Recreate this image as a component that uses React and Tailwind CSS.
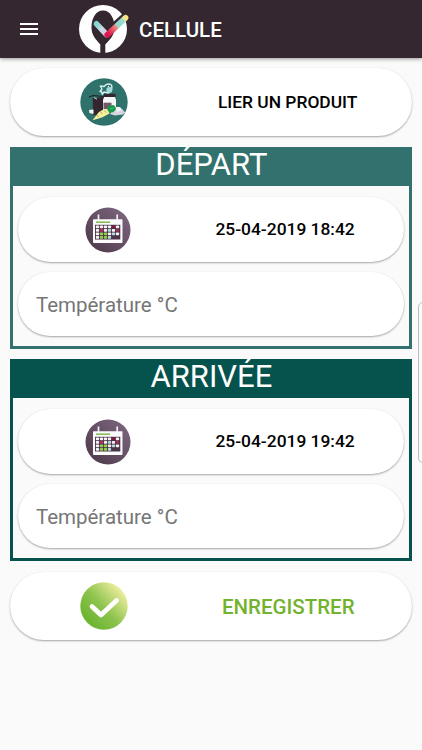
import React from "react";

function Logo() {
  return (
    <svg className="h-[50px] w-[52px] shrink-0" viewBox="0 0 52 50">
      <defs>
        <linearGradient id="tick" gradientUnits="userSpaceOnUse" x1="30" y1="31" x2="50" y2="12.500">
          <stop offset="0" stopColor="#e0124f" />
          <stop offset="0.15" stopColor="#e23558" />
          <stop offset="0.44" stopColor="#ed9187" />
          <stop offset="0.47" stopColor="#8fd8d0" />
          <stop offset="0.78" stopColor="#9ad9d2" />
          <stop offset="0.82" stopColor="#f5e58a" />
          <stop offset="1" stopColor="#f5e58a" />
        </linearGradient>
        <linearGradient id="tickLeft" gradientUnits="userSpaceOnUse" x1="18" y1="18" x2="30" y2="30">
          <stop offset="0" stopColor="#7fd3cd" />
          <stop offset="0.3" stopColor="#9bd8d6" />
          <stop offset="0.5" stopColor="#c9dbe4" />
          <stop offset="1" stopColor="#cfc8dc" />
        </linearGradient>
      </defs>
      <circle cx="25" cy="25" r="24" fill="#fff" />
      <path d="M25 6.500C18 6.500 13.500 14 13.500 23.500C13.500 32 19 36.500 22.300 40.500V50H27.300V40.500C31 36.500 36.500 32 36.500 23.500C36.500 14 32 6.500 25 6.500Z" fill="#34272f" />
      <path d="M33 25L47.500 12" stroke="#34272f" strokeWidth="7.500" strokeLinecap="round" />
      <path d="M18.500 19.800L28.500 30.500" stroke="url(#tickLeft)" strokeWidth="5.600" strokeLinecap="round" />
      <path d="M29.300 30.800L47.500 13.800" stroke="url(#tick)" strokeWidth="5.800" strokeLinecap="round" />
    </svg>
  );
}

function ProductIcon() {
  return (
    <svg className="h-12 w-12 shrink-0" viewBox="0 0 48 48">
      <circle cx="24" cy="24" r="23.700" fill="#2f716b" />
      <path d="M12.700 20L24 19V37H13Z" fill="#34252f" />
      <path d="M9 19L13 17.500L23 18.500L23 21" fill="none" stroke="#241d25" strokeWidth="1.200" />
      <path d="M14 19.500L17 21.200" stroke="#cde4e3" strokeWidth="1" />
      <rect x="23.700" y="15.700" width="12" height="3.500" rx="1" fill="#34252f" />
      <path d="M24 19H35L36 22V34H23V22Z" fill="#f5f4f7" />
      <path d="M23.500 24.700H31.500V31H23.500Z" fill="#715968" />
      <path d="M20 13.500L22 11L20.300 8L24 8.500C26 6 29 5.500 31.500 7C32.500 10 31.500 13 28.500 15L24 14L22.300 16.300L21.500 13.500Z" fill="#2f716b" stroke="#d8f2f1" strokeWidth="1.400" strokeLinejoin="round" />
      <circle cx="29.300" cy="12" r="3" fill="#a2dad9" />
      <circle cx="28.500" cy="8.500" r="0.700" fill="#d8f2f1" />
      <path d="M9 32L13.500 31.500V36L9.500 35Z" fill="#f6f5f7" />
      <path d="M32 33L36 29L40 29L43 32L45 34.500L43 36.500L35 37.500L30 36Z" fill="#d5d6e0" />
      <path d="M35 29.500L39 29L42 32L37 34Z" fill="#f2f2f6" />
      <path d="M12.500 42.300L18.500 34.500Q22 31 28 31L29.500 35.500L22 39.500Z" fill="#f5ee9a" />
      <path d="M20.500 33.500L22 36M24.500 32.500L26 34.500M17 37L18.500 39" stroke="#a59b65" strokeWidth="0.800" />
      <path d="M27.500 30Q27.500 27 31 27.500Q34 26 35 28.500Q37 31 34.500 33Q32 35.500 29.500 34Q27 33 27.500 30Z" fill="#17984c" />
      <path d="M30 31L33.500 30" stroke="#67ca8a" strokeWidth="0.700" />
    </svg>
  );
}

function CalendarIcon({ id }) {
  const colors = [
    ["#f6f2f7", "#f6f2f7", "#f6f2f7", "#f6f2f7", "#85173e", "#f6f2f7"],
    ["#f6f2f7", "#b82b5a", "#f6f2f7", "#b4dbdd", "#f6f2f7", "#a52c53"],
    ["#f6f2f7", "#91ce4d", "#91ce4d", "#f6f2f7", "#b4dbdd", "#f6f2f7"],
    ["#f6f2f7", "#91ce4d", "#91ce4d", "#b4dbdd"],
  ];
  return (
    <svg className="h-[46px] w-[46px] shrink-0" viewBox="0 0 46 46">
      <defs>
        <linearGradient id={id} x1="0" y1="1" x2="1" y2="0">
          <stop offset="0" stopColor="#4b3647" />
          <stop offset="1" stopColor="#806a83" />
        </linearGradient>
      </defs>
      <circle cx="23" cy="23" r="22.500" fill={`url(#${id})`} />
      <path d="M13.500 7.500V13M32.200 7.500V13" stroke="#f4eff5" strokeWidth="1.700" />
      <rect x="8" y="12.300" width="29.500" height="23.700" rx="0.800" fill="#fbfafc" />
      <path d="M11 15.200H25" stroke="#7fba47" strokeWidth="1.500" />
      <path d="M10 17.800H35.300V32.500H10Z" fill="#4b3447" />
      {colors.map((row, y) =>
        row.map((color, x) => (
          <rect key={`${x}-${y}`} x={10.9 + x * 4} y={18.5 + y * 3.5} width="3.200" height="2.800" rx="0.700" fill={color} />
        ))
      )}
    </svg>
  );
}

function SaveIcon() {
  return (
    <svg className="h-12 w-12 shrink-0" viewBox="0 0 48 48">
      <defs>
        <linearGradient id="save" x1="0.150" y1="0.850" x2="0.900" y2="0.150">
          <stop offset="0" stopColor="#6ab42e" />
          <stop offset="0.450" stopColor="#8dc34d" />
          <stop offset="1" stopColor="#f1f0a2" />
        </linearGradient>
      </defs>
      <circle cx="24" cy="24" r="23.700" fill="url(#save)" />
      <path d="M12 24.500L21 33L36.500 18.500" fill="none" stroke="#fff" strokeWidth="4.800" strokeLinecap="round" strokeLinejoin="round" />
    </svg>
  );
}

const pill = "flex shrink-0 items-center rounded-full bg-white shadow-[0_1px_2px_rgba(0,0,0,0.34),0_0_1px_rgba(0,0,0,0.04)]";

function Period({ title, date, id, className, fieldClass }) {
  return (
    <section className={`flex h-[202px] w-[402px] shrink-0 flex-col border-[3px] ${className}`}>
      <h2 className="flex h-9 shrink-0 items-center justify-center bg-inherit pb-[6px] text-[31px] leading-[30px] text-white">{title}</h2>
      <div className="flex flex-1 flex-col gap-2.5 bg-[#fafafa] px-[5px] pt-[11px]">
        <button type="button" className={`${pill} h-[65px] w-[386px] pl-[67px]`}>
          <CalendarIcon id={id} />
          <span className="ml-[84px] whitespace-nowrap text-[17.400px] font-medium">{date}</span>
        </button>
        <div className={`${pill} h-16 w-[386px] pl-[17.500px] ${fieldClass}`}>
          <input aria-label={`${title} température`} placeholder="Température °C" className="w-[330px] bg-transparent text-[20.500px] text-[#767676] outline-none placeholder:text-[#767676]" />
        </div>
      </div>
    </section>
  );
}

export default function App() {
  return (
    <main className="relative flex h-[750px] w-[422px] flex-col overflow-hidden bg-[#fafafa] font-['Roboto',sans-serif] text-black">
      <header className="flex h-[58px] shrink-0 items-center bg-[#34272f] pl-5 shadow-[0_1px_4px_rgba(0,0,0,0.4)]">
        <button type="button" aria-label="Menu" className="flex h-3 w-[18px] flex-col justify-between">
          <span className="h-0.5 w-full bg-white" />
          <span className="h-0.5 w-full bg-white" />
          <span className="h-0.5 w-full bg-white" />
        </button>
        <div className="ml-[40px] flex items-center">
          <Logo />
          <h1 className="ml-[9px] pt-0.5 text-[20.500px] font-medium text-white">CELLULE</h1>
        </div>
      </header>

      <div className="flex flex-col pl-[10.400px]">
        <button type="button" className={`${pill} mt-2.5 h-[68px] w-[402px] pl-[69.500px]`}>
          <ProductIcon />
          <span className="ml-[90px] whitespace-nowrap pt-px text-[17.400px] font-medium">LIER UN PRODUIT</span>
        </button>

        <div className="mt-[11px] flex flex-col gap-[10px]">
          <Period title="DÉPART" date="25-04-2019 18:42" id="departure" className="border-[#32716d] bg-[#32716d]" fieldClass="pt-0.5" />
          <Period title="ARRIVÉE" date="25-04-2019 19:42" id="arrival" className="border-[#06524d] bg-[#06524d]" fieldClass="pt-[3px]" />
        </div>

        <button type="button" className={`${pill} mt-[11px] h-[68px] w-[402px] pl-[69.500px]`}>
          <SaveIcon />
          <span className="ml-[94px] whitespace-nowrap pt-0.5 text-[20.500px] font-medium text-[#73b22d]">ENREGISTRER</span>
        </button>
      </div>

      <span className="absolute left-[418px] top-[302px] h-[161px] w-3 rounded-[5px] border border-[#bdbdbd] bg-[#fafafa]" />
    </main>
  );
}
